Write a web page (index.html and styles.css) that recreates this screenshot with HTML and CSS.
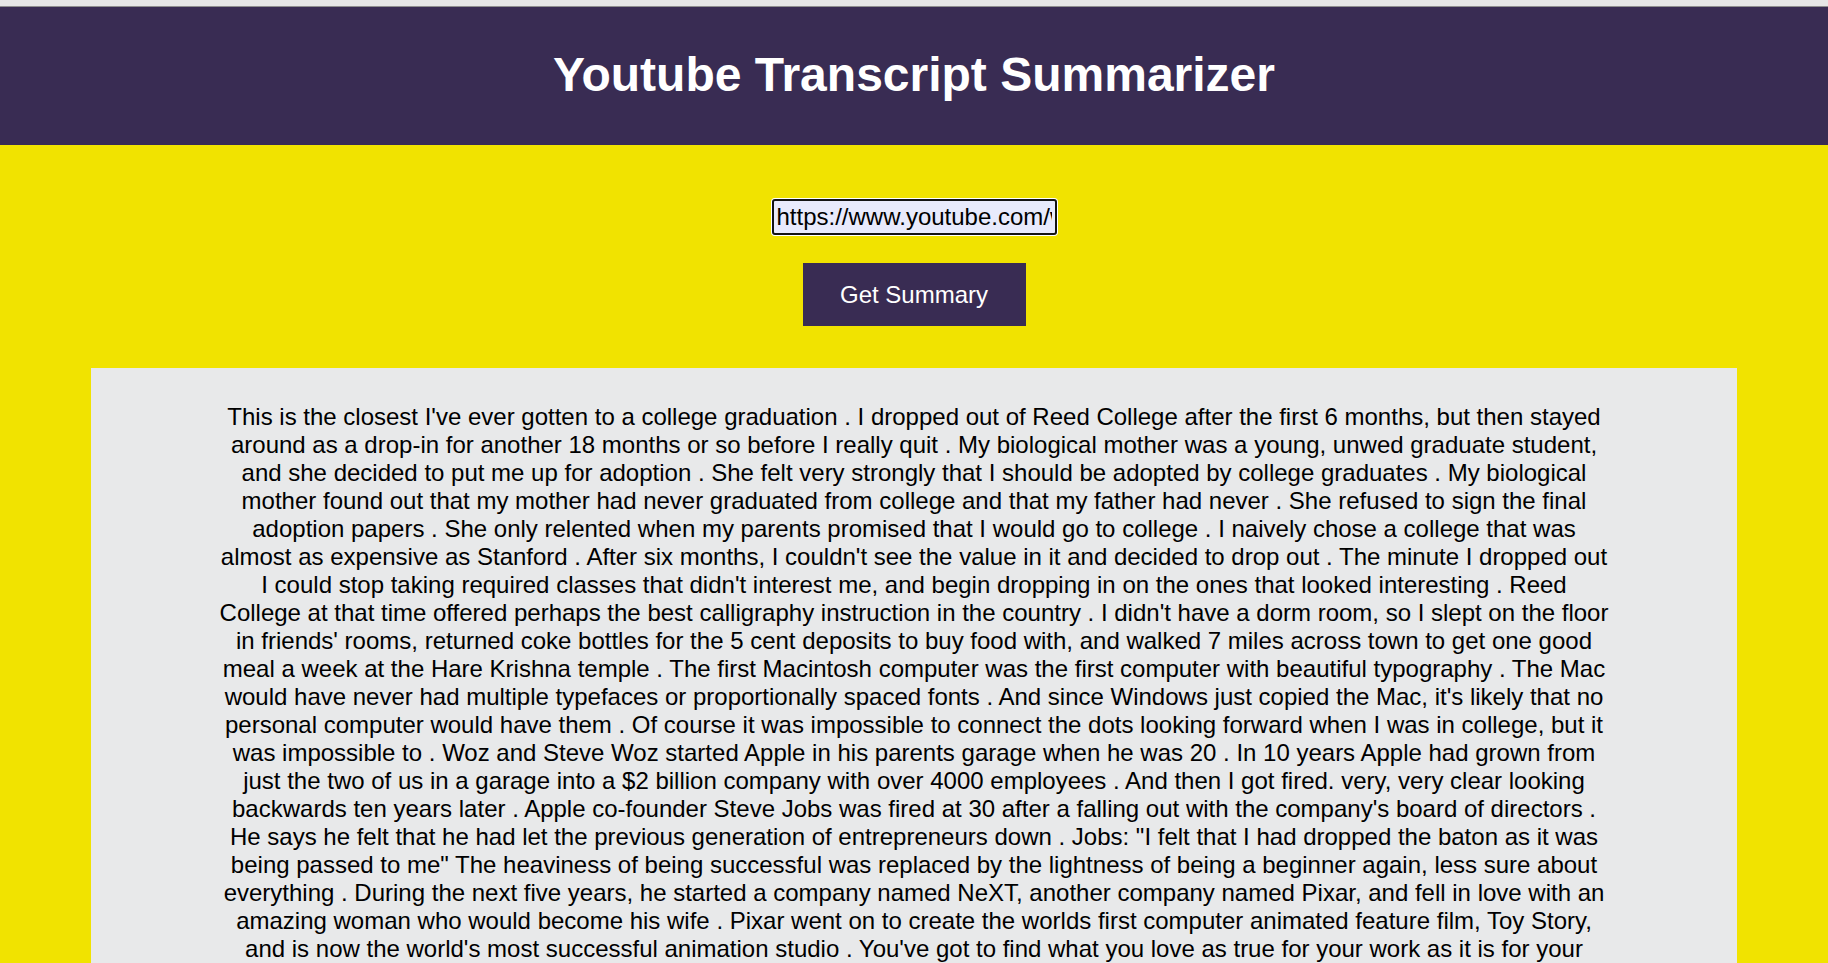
FILE: index.html
```html
<!DOCTYPE html>
<html lang="en">
<head>
<meta charset="utf-8">
<title>Youtube Transcript Summarizer</title>
<link rel="stylesheet" href="styles.css">
</head>
<body>
<div class="topstrip"></div>
<header class="header">
  <h1 class="title">Youtube Transcript Summarizer</h1>
</header>
<main class="main">
  <form class="form">
    <input class="url-input" type="text" value="https://www.youtube.com/watch?v=UF8uR6Z6KLc">
    <button class="submit" type="button">Get Summary</button>
  </form>
  <section class="summary">
    <p class="summary-text">This is the closest I've ever gotten to a college graduation . I dropped out of Reed College after the first 6 months, but then stayed<br>
around as a drop-in for another 18 months or so before I really quit . My biological mother was a young, unwed graduate student,<br>
and she decided to put me up for adoption . She felt very strongly that I should be adopted by college graduates . My biological<br>
mother found out that my mother had never graduated from college and that my father had never . She refused to sign the final<br>
adoption papers . She only relented when my parents promised that I would go to college . I naively chose a college that was<br>
almost as expensive as Stanford . After six months, I couldn't see the value in it and decided to drop out . The minute I dropped out<br>
I could stop taking required classes that didn't interest me, and begin dropping in on the ones that looked interesting . Reed<br>
College at that time offered perhaps the best calligraphy instruction in the country . I didn't have a dorm room, so I slept on the floor<br>
in friends' rooms, returned coke bottles for the 5 cent deposits to buy food with, and walked 7 miles across town to get one good<br>
meal a week at the Hare Krishna temple . The first Macintosh computer was the first computer with beautiful typography . The Mac<br>
would have never had multiple typefaces or proportionally spaced fonts . And since Windows just copied the Mac, it's likely that no<br>
personal computer would have them . Of course it was impossible to connect the dots looking forward when I was in college, but it<br>
was impossible to . Woz and Steve Woz started Apple in his parents garage when he was 20 . In 10 years Apple had grown from<br>
just the two of us in a garage into a $2 billion company with over 4000 employees . And then I got fired. very, very clear looking<br>
backwards ten years later . Apple co-founder Steve Jobs was fired at 30 after a falling out with the company's board of directors .<br>
He says he felt that he had let the previous generation of entrepreneurs down . Jobs: "I felt that I had dropped the baton as it was<br>
being passed to me" The heaviness of being successful was replaced by the lightness of being a beginner again, less sure about<br>
everything . During the next five years, he started a company named NeXT, another company named Pixar, and fell in love with an<br>
amazing woman who would become his wife . Pixar went on to create the worlds first computer animated feature film, Toy Story,<br>
and is now the world's most successful animation studio . You've got to find what you love as true for your work as it is for your<br>
lovers . Don't settle . As with all matters of the heart, you'll know when you find it . Stay hungry, stay foolish .</p>
  </section>
</main>
</body>
</html>
```

FILE: styles.css
```css
html, body {
  margin: 0;
  padding: 0;
}

body {
  background: #f1e300;
  font-family: "Liberation Sans", Arial, sans-serif;
  color: #000;
}

.topstrip {
  height: 6px;
  background: #e6e6e6;
  border-bottom: 1px solid #8e8e8e;
}

.header {
  background: #392c53;
  padding: 40px 0 43px;
  text-align: center;
}

.title {
  margin: 0;
  font-size: 48px;
  font-weight: bold;
  line-height: 55px;
  color: #ffffff;
}

.main {
  display: flex;
  flex-direction: column;
}

.form {
  display: flex;
  flex-direction: column;
  align-items: center;
  gap: 28px;
  padding: 54px 0 42px;
  margin: 0;
}

.url-input {
  box-sizing: border-box;
  width: 285px;
  height: 36px;
  padding: 1px 3px;
  font-family: "Liberation Sans", Arial, sans-serif;
  font-size: 24px;
  color: #000;
  background: #e8eafc;
  border: 2px solid #141414;
  border-radius: 3px;
  box-shadow: 0 0 0 1px #ffffff;
  outline: none;
}

.submit {
  box-sizing: border-box;
  width: 223px;
  height: 63px;
  padding: 0;
  border: none;
  background: #392c53;
  color: #ffffff;
  font-family: "Liberation Sans", Arial, sans-serif;
  font-size: 24px;
  cursor: pointer;
}

.summary {
  margin: 0 5%;
  background: #e8e9ea;
  padding: 35px 100px 40px;
}

.summary-text {
  margin: 0;
  font-size: 24px;
  line-height: 28px;
  text-align: center;
}
```
